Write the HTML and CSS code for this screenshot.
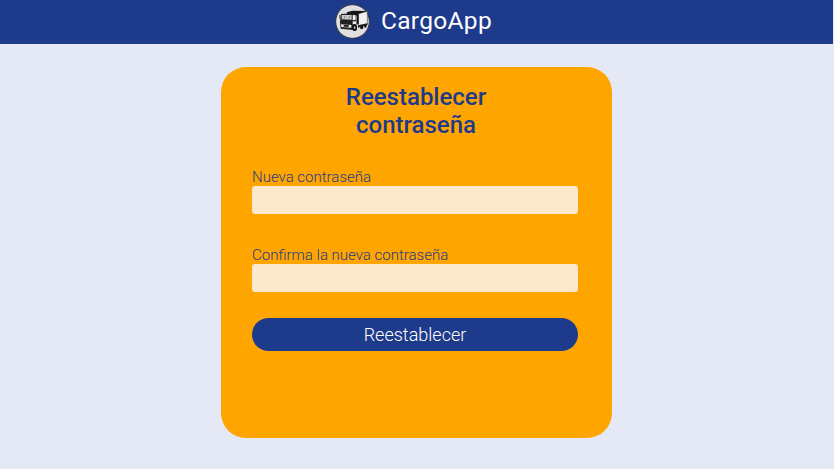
FILE: index.html
```html
<!DOCTYPE html>
<html lang="es">
<head>
<meta charset="utf-8">
<title>CargoApp</title>
<link rel="stylesheet" href="styles.css">
</head>
<body>
<header class="topbar">
  <svg class="logo" viewBox="3 6 105 105" aria-hidden="true">
    <circle cx="55.500" cy="58.500" r="50.500" fill="#e0e0e0" stroke="#30343c" stroke-width="3"/>
    <path d="M73 35l27-7v41l-27 8z" fill="#f0f0f0" stroke="#444" stroke-width="2"/>
    <path d="M38 31l17-5 45 1-26 8v32h-6V41l-28-4z" fill="#151515"/>
    <path d="M21 36l32-2 14 3v38l-11 9-36-4-2-19z" fill="#202020"/>
    <path d="M23 39h30v14l-30-1z" fill="#c8c8c8"/>
    <path d="M56 39l9 1v14l-9 1z" fill="#f2f2f2"/>
    <path d="M56 58h10v9H56z" fill="#eee"/>
    <path d="M30 50l4-8m10 8l4-8" stroke="#555" stroke-width="2"/>
    <path d="M18 39v12" stroke="#222" stroke-width="3"/>
    <path d="M21 67l31 2v8l-30-2z" fill="#eee"/>
    <path d="M29 68l15 1v6l-15-1z" fill="#222"/>
    <ellipse cx="62" cy="77" rx="7" ry="10" fill="#111"/>
    <ellipse cx="62" cy="77" rx="2.500" ry="4" fill="#bbb"/>
    <path d="M72 70l28-6v4l-28 8z" fill="#222"/>
    <ellipse cx="83" cy="75" rx="5" ry="7" fill="#151515"/>
    <ellipse cx="94" cy="71" rx="4" ry="6" fill="#151515"/>
  </svg>
  <span class="brand">CargoApp</span>
</header>
<main>
  <form class="card">
    <h1>Reestablecer contraseña</h1>
    <label for="password">Nueva contraseña</label>
    <input id="password" type="password">
    <label for="confirm">Confirma la nueva contraseña</label>
    <input id="confirm" type="password">
    <button type="button">Reestablecer</button>
  </form>
</main>
</body>
</html>
```
FILE: styles.css
```css
* { box-sizing: border-box; }
body {
  margin: 0;
  min-height: 469px;
  background: #e5e9f5;
  color: #1e3a8a;
  font-family: Roboto, "Liberation Sans", sans-serif;
}
.topbar {
  display: flex;
  align-items: center;
  gap: 11px;
  height: 44px;
  margin-right: 1px;
  padding-left: 335px;
  background: #1e3a8a;
}
.logo {
  width: 35px;
  height: 35px;
  margin-bottom: 1px;
}
.brand {
  color: #fff;
  font-size: 24.5px;
  line-height: 28px;
  letter-spacing: 0.3px;
  margin-bottom: 2px;
}
.card {
  display: flex;
  flex-direction: column;
  width: 391px;
  height: 371px;
  margin: 23px 0 0 221px;
  padding: 16px 34px 0 31px;
  border-radius: 25px;
  background: #ffa500;
}
h1 {
  align-self: center;
  width: 180px;
  margin: 0 0 29px 2px;
  font-size: 24px;
  font-weight: 500;
  line-height: 28px;
  text-align: center;
}
label {
  height: 18px;
  font-size: 15px;
  font-weight: 300;
  line-height: 18px;
}
input {
  width: 100%;
  height: 28px;
  margin: 0 0 32px;
  padding: 0 8px;
  border: 0;
  border-radius: 3px;
  background: #fce8cd;
}
button {
  height: 33px;
  margin-top: -6px;
  padding: 0;
  border: 0;
  border-radius: 17px;
  background: #1e3a8a;
  color: #fff;
  font: 300 18px/33px Roboto, "Liberation Sans", sans-serif;
}
```
